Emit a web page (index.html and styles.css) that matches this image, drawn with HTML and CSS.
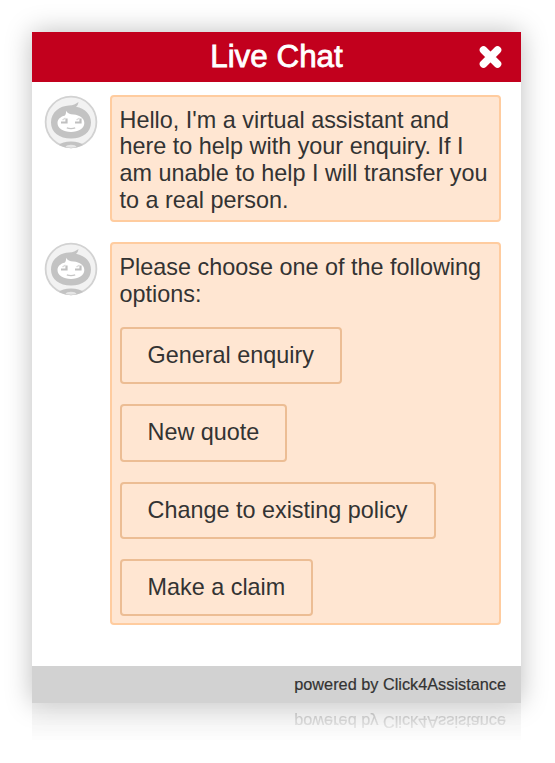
FILE: index.html
```html
<!DOCTYPE html>
<html lang="en">
<head>
  <meta charset="UTF-8">
  <meta name="viewport" content="width=device-width, initial-scale=1.0">
  <title>Live Chat</title>
  <link rel="stylesheet" href="styles.css">
</head>
<body>
  <svg class="sprite" width="0" height="0">
    <symbol id="bot" viewBox="0 0 54 54">
      <circle cx="27" cy="27" r="25.4" fill="#f2f2f2" stroke="#d2d2d2" stroke-width="1.8"/>
      <path d="M15 50 Q18 46.500 27 46.500 Q36 46.500 39 50 Q27 56.500 15 50Z" fill="#c3c3c3"/>
      <path d="M21.500 52 Q22.500 49.700 27 49.700 Q31.500 49.700 32.500 52 Q27 53.500 21.500 52Z" fill="#e6e6e6"/>
      <path d="M7 27.500 C7 17 16 10.800 25 10.500 C29 10.300 32 9 34.500 7 C34.200 9.300 33.300 10.800 32 11.800 C41 13.500 47 19.500 47 27.500 C47 37.500 38.500 43.500 27 43.500 C15.500 43.500 7 37.500 7 27.500Z" fill="#c3c3c3"/>
      <path d="M22 15.800 C23 18.300 26 19.300 29.500 19.500 C36 20 40.300 23.500 40.300 28 C40.300 33.500 34.500 37 27 37 C19.500 37 13.500 33.500 13.500 28 C13.500 24.500 16.500 21.500 21 20.500 C21.800 19.300 22.200 17.800 22 15.800Z" fill="#fff"/>
      <path d="M17 27.500 H22.500 V23.500 M31 27.500 H36.500 V23.500" fill="none" stroke="#c0c0c0" stroke-width="2.200"/>
      <path d="M18.500 25 L21.500 23 M32.500 25 L35.500 23" stroke="#dadada" stroke-width="1.500"/>
      <path d="M22.800 32.800 Q27 34.300 31.200 32.800" fill="none" stroke="#c6c6c6" stroke-width="1.300"/>
    </symbol>
  </svg>

  <div class="chat">
    <div class="chat-header">
      <h1>Live Chat</h1>
      <button class="close-btn" aria-label="Close">
        <svg width="24" height="24" viewBox="0 0 24 24">
          <path d="M5.500 5 L19.500 19 M19.500 5 L5.500 19" stroke="#fff" stroke-width="7.600" stroke-linecap="round"/>
        </svg>
      </button>
    </div>

    <div class="messages">
      <div class="message">
        <svg class="avatar"><use href="#bot"/></svg>
        <div class="bubble">
          <p>Hello, I'm a virtual assistant and here to help with your enquiry. If I am unable to help I will transfer you to a real person.</p>
        </div>
      </div>
      <div class="message">
        <svg class="avatar"><use href="#bot"/></svg>
        <div class="bubble">
          <p>Please choose one of the following options:</p>
          <div class="options">
            <button class="option">General enquiry</button>
            <button class="option">New quote</button>
            <button class="option">Change to existing policy</button>
            <button class="option">Make a claim</button>
          </div>
        </div>
      </div>
    </div>

    <div class="chat-footer">powered by Click4Assistance</div>
  </div>
  <div class="chat-footer reflection" aria-hidden="true">powered by Click4Assistance</div>
</body>
</html>
```
FILE: styles.css
```css
* {
  box-sizing: border-box;
}
body {
  margin: 0;
  padding: 32px 34px 0 32px;
  background-color: #fff;
  font-family: "Liberation Sans", Arial, sans-serif;
  font-size: 23.4px;
  color: #333;
}
.sprite {
  position: absolute;
}
.chat {
  width: 489px;
  height: 671px;
  display: flex;
  flex-direction: column;
  background-color: #fff;
  box-shadow: 0 0 25px rgba(0, 0, 0, 0.26);
}
.chat-header {
  height: 50px;
  flex: none;
  display: grid;
  grid-template-columns: 1fr auto 1fr;
  align-items: center;
  background-color: #c2001d;
  color: #fff;
}
.chat-header h1 {
  grid-column: 2;
  margin: 0;
  font-size: 31.4px;
  line-height: 50px;
  font-weight: normal;
  -webkit-text-stroke: 0.8px #fff;
}
.close-btn {
  justify-self: end;
  display: flex;
  margin-right: 19px;
  padding: 0;
  border: none;
  background: none;
  cursor: pointer;
}
.messages {
  flex: 1;
  display: flex;
  flex-direction: column;
  gap: 20px;
  padding: 13px 20px 0 12px;
}
.message {
  display: flex;
  align-items: flex-start;
  gap: 12px;
}
.avatar {
  width: 54px;
  height: 54px;
  flex: none;
}
.bubble {
  flex: 1;
  padding: 9.6px 8px 6.8px 7.5px;
  border: 2px solid #ffcc9f;
  border-radius: 4px;
  background-color: #ffe6d2;
}
.bubble p {
  margin: 0;
  line-height: 26.7px;
}
.options {
  display: flex;
  flex-direction: column;
  align-items: flex-start;
  gap: 20px;
  margin-top: 20px;
}
.option {
  height: 57.2px;
  padding: 0 26px;
  border: 2px solid #ecbd94;
  border-radius: 4px;
  background: none;
  font: inherit;
  color: inherit;
  cursor: pointer;
}
.chat-footer {
  height: 37px;
  flex: none;
  padding-right: 15px;
  background-color: #d2d2d2;
  font-size: 16.3px;
  line-height: 36px;
  text-align: right;
  -webkit-text-stroke: 0.2px #333;
}
.reflection {
  width: 489px;
  transform: scaleY(-1);
  opacity: 0.35;
  -webkit-mask-image: linear-gradient(to top, #000, rgba(0, 0, 0, 0.1));
  mask-image: linear-gradient(to top, #000, rgba(0, 0, 0, 0.1));
}
```
